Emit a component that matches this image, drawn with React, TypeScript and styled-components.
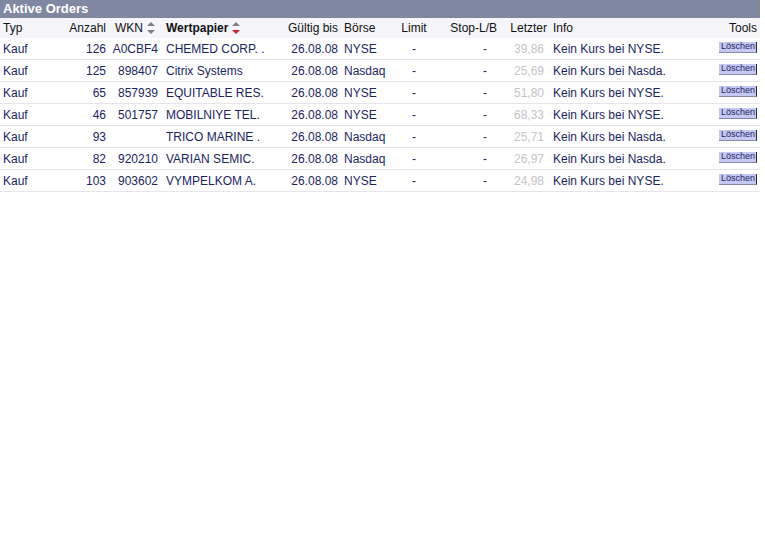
import React from "react";
import styled, { createGlobalStyle } from "styled-components";

const Global = createGlobalStyle`
  html, body { margin: 0; padding: 0; background: #ffffff; }
  body { font-family: "Liberation Sans", Arial, sans-serif; }
`;

const COLS = "62px 46px 52px 122px 58px 52px 44px 64px 49px 1fr 60px";

const Wrapper = styled.div`
  width: 760px;
  font-size: 12px;
`;

const TitleBar = styled.div`
  height: 18px;
  background: #7f87a1;
  color: #ffffff;
  font-weight: bold;
  font-size: 13px;
  line-height: 18px;
  padding-left: 3px;
`;

const Row = styled.div<{ $head?: boolean }>`
  display: grid;
  grid-template-columns: ${COLS};
  align-items: center;
  height: ${(p) => (p.$head ? "20px" : "21px")};
  background: ${(p) => (p.$head ? "#f5f5fa" : "#ffffff")};
  border-bottom: ${(p) => (p.$head ? "none" : "1px solid #e6e6ea")};
  color: ${(p) => (p.$head ? "#111111" : "#1b2462")};
`;

const Cell = styled.div<{ $align?: "left" | "right" | "center"; $pl?: number; $pr?: number; $bold?: boolean; $muted?: boolean }>`
  padding-left: ${(p) => p.$pl ?? 0}px;
  padding-right: ${(p) => p.$pr ?? 0}px;
  font-weight: ${(p) => (p.$bold ? "bold" : "normal")};
  color: ${(p) => (p.$muted ? "#c4c4c8" : "inherit")};
  white-space: nowrap;
  overflow: hidden;
  display: flex;
  align-items: center;
  justify-content: ${(p) => (p.$align === "right" ? "flex-end" : p.$align === "center" ? "center" : "flex-start")};
`;

const Sort = styled.span`
  display: inline-flex;
  margin-left: 3px;
`;

const DeleteButton = styled.button`
  font-family: "Liberation Sans", Arial, sans-serif;
  font-size: 9px;
  line-height: 11px;
  height: 13px;
  padding: 0 1px 0 2px;
  margin: 0;
  background: #c5c8f2;
  color: #1b2462;
  border: none;
  border-right: 1px solid #2a2a40;
  border-bottom: 1px solid #8a8aa8;
  cursor: pointer;
  position: relative;
  top: -2px;
`;

const SortIcon = ({ active }: { active?: boolean }) => (
  <svg width="10" height="14" viewBox="0 0 10 14">
    <polygon points="5,1 9,5 1,5" fill="#808084" />
    <polygon points="1,9 9,9 5,13" fill={active ? "#c8202c" : "#808084"} />
  </svg>
);

const orders = [
  { n: 126, wkn: "A0CBF4", name: "CHEMED CORP. .", date: "26.08.08", ex: "NYSE", last: "39,86", info: "Kein Kurs bei NYSE." },
  { n: 125, wkn: "898407", name: "Citrix Systems", date: "26.08.08", ex: "Nasdaq", last: "25,69", info: "Kein Kurs bei Nasda." },
  { n: 65, wkn: "857939", name: "EQUITABLE RES.", date: "26.08.08", ex: "NYSE", last: "51,80", info: "Kein Kurs bei NYSE." },
  { n: 46, wkn: "501757", name: "MOBILNIYE TEL.", date: "26.08.08", ex: "NYSE", last: "68,33", info: "Kein Kurs bei NYSE." },
  { n: 93, wkn: "", name: "TRICO MARINE .", date: "26.08.08", ex: "Nasdaq", last: "25,71", info: "Kein Kurs bei Nasda." },
  { n: 82, wkn: "920210", name: "VARIAN SEMIC.", date: "26.08.08", ex: "Nasdaq", last: "26,97", info: "Kein Kurs bei Nasda." },
  { n: 103, wkn: "903602", name: "VYMPELKOM A.", date: "26.08.08", ex: "NYSE", last: "24,98", info: "Kein Kurs bei NYSE." },
];

export default function App() {
  return (
    <>
      <Global />
      <Wrapper>
        <TitleBar>Aktive Orders</TitleBar>
        <Row $head>
          <Cell $pl={3}>Typ</Cell>
          <Cell $align="right" $pr={2}>Anzahl</Cell>
          <Cell $align="right" $pr={4}>
            WKN
            <Sort><SortIcon /></Sort>
          </Cell>
          <Cell $pl={6} $bold>
            Wertpapier
            <Sort><SortIcon active /></Sort>
          </Cell>
          <Cell $align="right" $pr={2}>Gültig bis</Cell>
          <Cell $pl={4}>Börse</Cell>
          <Cell $align="center">Limit</Cell>
          <Cell $align="right" $pr={3}>Stop-L/B</Cell>
          <Cell $align="right" $pr={2}>Letzter</Cell>
          <Cell $pl={4}>Info</Cell>
          <Cell $align="right" $pr={3}>Tools</Cell>
        </Row>
        {orders.map((o, i) => (
          <Row key={i}>
            <Cell $pl={3}>Kauf</Cell>
            <Cell $align="right" $pr={2}>{o.n}</Cell>
            <Cell $align="right" $pr={2}>{o.wkn}</Cell>
            <Cell $pl={6}>{o.name}</Cell>
            <Cell $align="right" $pr={2}>{o.date}</Cell>
            <Cell $pl={4}>{o.ex}</Cell>
            <Cell $align="center">-</Cell>
            <Cell $align="right" $pr={13}>-</Cell>
            <Cell $align="right" $pr={5} $muted>{o.last}</Cell>
            <Cell $pl={4}>{o.info}</Cell>
            <Cell $align="right" $pr={3}>
              <DeleteButton>Löschen</DeleteButton>
            </Cell>
          </Row>
        ))}
      </Wrapper>
    </>
  );
}
